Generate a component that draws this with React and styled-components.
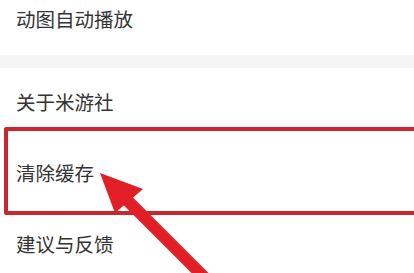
import React from "react";
import styled, { createGlobalStyle } from "styled-components";

const GlobalStyle = createGlobalStyle`
  html, body {
    margin: 0;
    padding: 0;
    background: #ffffff;
    overflow: hidden;
  }
  * { box-sizing: border-box; }
`;

const Page = styled.div`
  position: relative;
  width: 414px;
  height: 273px;
  overflow: hidden;
  background: #ffffff;
  font-family: "Noto Sans CJK SC", "Noto Sans", sans-serif;
`;

const Section = styled.div`
  display: flex;
  flex-direction: column;
  margin-top: ${(p) => p.offset || 0}px;
`;

const Row = styled.div`
  display: flex;
  align-items: center;
  height: ${(p) => p.h || 71}px;
  padding: 0 16px 4px;
  font-size: 19.5px;
  color: #333333;
  letter-spacing: 0;
`;

const Gap = styled.div`
  height: 13px;
  background: #f5f5f6;
`;

/* annotation box, runs off the right edge of the shot */
const Highlight = styled.div`
  position: absolute;
  left: 4px;
  right: 0;
  top: 127px;
  height: 88px;
  border: 4px solid #c9262f;
  border-right: none;
  border-radius: 3px 0 0 3px;
  pointer-events: none;
`;

const ArrowLayer = styled.svg`
  position: absolute;
  left: 0;
  top: 0;
  width: 414px;
  height: 273px;
  pointer-events: none;
`;

const Arrow = () => (
  <ArrowLayer viewBox="0 0 414 273">
    <line
      x1="124"
      y1="197"
      x2="218"
      y2="291"
      stroke="#e21f27"
      strokeWidth="12"
    />
    <polygon points="100,173 143,189 115,213" fill="#e21f27" />
  </ArrowLayer>
);

export default function App() {
  return (
    <>
      <GlobalStyle />
      <Page>
        <Section offset={-15}>
          <Row h={70}>动图自动播放</Row>
        </Section>
        <Gap />
        <Section>
          <Row>关于米游社</Row>
          <Row>清除缓存</Row>
          <Row>建议与反馈</Row>
        </Section>
        <Highlight />
        <Arrow />
      </Page>
    </>
  );
}
